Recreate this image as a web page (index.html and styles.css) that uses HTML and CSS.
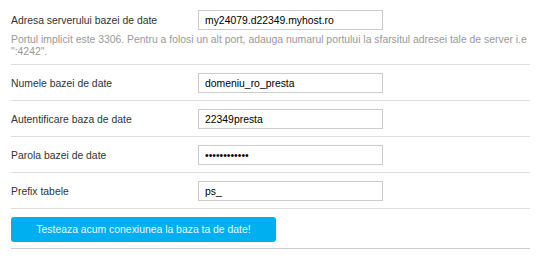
FILE: index.html
```html
<!DOCTYPE html>
<html lang="ro">
<head>
  <meta charset="UTF-8" />
  <title>Configurare baza de date</title>
  <link rel="stylesheet" href="styles.css">
</head>
<body>
  <form class="db-form">
    <div class="field first">
      <div class="field-row">
        <label for="dbServer">Adresa serverului bazei de date</label>
        <input type="text" id="dbServer" value="my24079.d22349.myhost.ro" />
      </div>
      <p class="help">Portul implicit este 3306. Pentru a folosi un alt port, adauga numarul portului la sfarsitul adresei tale de server i.e ":4242".</p>
    </div>
    <div class="field">
      <div class="field-row">
        <label for="dbName">Numele bazei de date</label>
        <input type="text" id="dbName" value="domeniu_ro_presta" />
      </div>
    </div>
    <div class="field">
      <div class="field-row">
        <label for="dbLogin">Autentificare baza de date</label>
        <input type="text" id="dbLogin" value="22349presta" />
      </div>
    </div>
    <div class="field">
      <div class="field-row">
        <label for="dbPassword">Parola bazei de date</label>
        <input type="password" id="dbPassword" value="abcdefghijkl" />
      </div>
    </div>
    <div class="field">
      <div class="field-row">
        <label for="dbPrefix">Prefix tabele</label>
        <input type="text" id="dbPrefix" value="ps_" />
      </div>
    </div>
    <div class="field actions">
      <button type="button" class="btn-test">Testeaza acum conexiunea la baza ta de date!</button>
    </div>
  </form>
</body>
</html>
```

FILE: styles.css
```css
body {
  margin: 0;
  font-family: "Liberation Sans", Arial, sans-serif;
  color: #333;
  background: #fff;
}

.db-form {
  width: 519px;
  margin-left: 11px;
}

.field {
  padding: 8px 0 7px;
  border-bottom: 1px solid #ddd;
}

.field.first {
  padding: 10px 0 6px;
}

.field-row {
  display: flex;
  align-items: center;
}

.field-row label {
  width: 187px;
  font-size: 10.4px;
}

.field-row input {
  box-sizing: border-box;
  width: 185px;
  height: 20px;
  margin: 0;
  padding: 0 6px;
  border: 1px solid #ccc;
  font-family: "Liberation Sans", Arial, sans-serif;
  font-size: 10.4px;
  color: #000;
  outline: none;
}

.help {
  margin: 4px 0 0;
  font-size: 10.4px;
  line-height: 12px;
  color: #999;
}

.actions {
  padding: 8px 0 6px;
  border-bottom-color: #ccc;
}

.btn-test {
  display: block;
  width: 265px;
  height: 25px;
  border: none;
  border-radius: 3px;
  background: #00aff0;
  color: #e8f7fd;
  font-family: "Liberation Sans", Arial, sans-serif;
  font-size: 10.4px;
  cursor: pointer;
}
```
